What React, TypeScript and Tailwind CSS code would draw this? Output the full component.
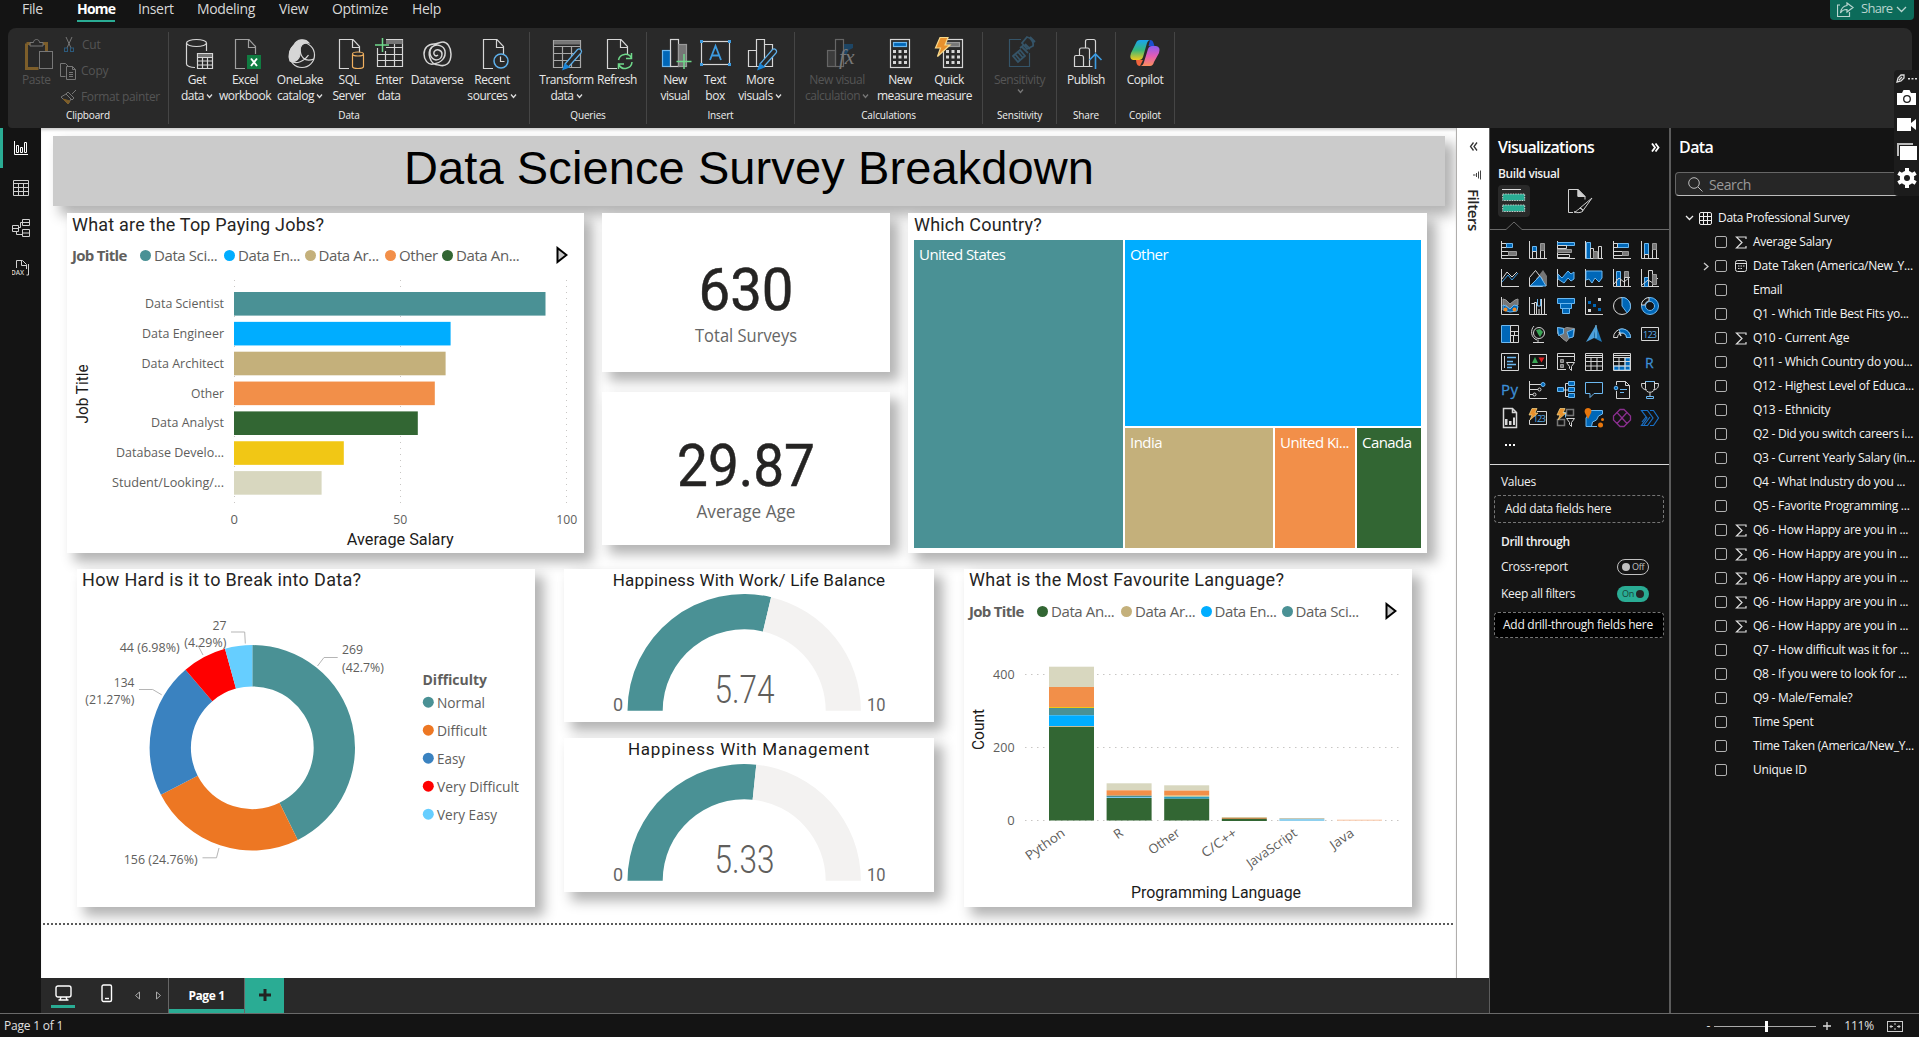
import React from "react";

const W = "#d6d6d6";
const B = "#0067b8";
const L = "#6cb8f0";
const G = "#767676";
const TEAL = "#4a9195";

const SEGOE = "'Open Sans','Noto Sans',sans-serif";
const DIN = "Roboto,sans-serif";

type Kids = { children?: React.ReactNode };

/* ---------- ribbon icons (30 x 30) ---------- */
const Ico = ({ children, w = 30, h = 30 }: Kids & { w?: number; h?: number }) => (
  <svg width={w} height={h} viewBox={`0 0 ${w} ${h}`} fill="none" stroke={W} strokeWidth={1.2} className="block shrink-0">
    {children}
  </svg>
);
const Doc = () => <path d="M14 29.5H4.500V.5H18l6.500 7V15M17.500.5v8h7" />;
const Pencil = () => (
  <g>
    <path d="M13 25 25.500 10.500a2.500 2.500 0 0 1 3.500 3.500L16.500 28" stroke="#5fb0ea" fill="#292929" />
    <path d="M13 25l-2 5.500 6-2.500z" fill="#1a86d9" stroke="#1a86d9" />
  </g>
);

const GetData = () => (
  <Ico>
    <ellipse cx="12.500" cy="4" rx="10" ry="3.500" />
    <path d="M2.500 4v21c0 2 4 3.500 8.500 3.500M22.500 4v8" />
    <path d="M13.500 14.500h15v15h-15zM13.500 18.500h15M13.500 22h15M13.500 26h15M18.500 18v11M23.500 18v11" />
    <path d="M14 16.500h14" stroke={G} strokeWidth={3} />
  </Ico>
);
const Excel = () => (
  <Ico>
    <g stroke="#a0a0a0"><Doc /></g>
    <rect x="16" y="16" width="14" height="14" fill="#107c41" stroke="none" />
    <path d="M20 19.500l6 7.500M26 19.500l-6 7.500" stroke="#fff" strokeWidth={2} />
  </Ico>
);
const OneLake = () => (
  <Ico>
    <circle cx="15" cy="16" r="12.500" />
    <path d="M7 6C10 0 18-1 22 4c-7-1-9 3-9 8 1 8-5 12-10 10-2-6 0-12 4-16z" fill="#d6d6d6" />
    <path d="M13 9c0 8 4 15 14 11M3.500 22c6 4 14 0 18-6" />
  </Ico>
);
const Sql = () => (
  <Ico>
    <Doc />
    <path d="M17.500 15.500v12c0 1.200 2.500 2 5.500 2s5.500-.8 5.500-2v-12" stroke="#f0b060" fill="#292929" />
    <ellipse cx="23" cy="15" rx="5.500" ry="2" stroke="#f0b060" fill="#292929" />
  </Ico>
);
const EnterData = () => (
  <Ico>
    <path d="M3.500 9v18.500h25V.5H12M3.500 15.500h25M3.500 21.500h25M11.500 12v15.500M20.500 5v22.500M12 8.500h16" />
    <path d="M12 3h16.500" stroke={G} strokeWidth={4} />
    <path d="M8.500-1v14M1 6h14" stroke="#6fd88a" strokeWidth={1.500} />
  </Ico>
);
const Dataverse = () => (
  <Ico>
    <path d="M17 26c6 2 12-1 12-11 0-7-4-12-8-12-3 0-6 2-9 2C6 5 2 9 2 15c0 6 4 11 9 10 9-1 13-7 12-13-1-5-8-8-13-4-4 4-2 12 4 13 4 0 6-3 6-6 0-4-6-6-8-2-1 3 2 5 4 3" strokeWidth={1.500} />
    <path d="M10 8C5 13 7 26 17 26" strokeWidth={1.500} />
  </Ico>
);
const Recent = () => (
  <Ico>
    <Doc />
    <circle cx="22" cy="22" r="7" stroke="#5fb0ea" fill="#292929" strokeWidth={1.500} />
    <path d="M21.500 17.500v5h4" />
  </Ico>
);
const Transform = () => (
  <Ico>
    <path d="M1.500 1.500h27v27h-27zM1.500 7.500h27M1.500 14.500h27M1.500 21.500h27M10.500 7v21M19.500 7v21" stroke="#a8a8a8" />
    <path d="M2 3.500h26" stroke={G} strokeWidth={4} />
    <Pencil />
  </Ico>
);
const Refresh = () => (
  <Ico>
    <Doc />
    <path d="M15.500 21a7 7 0 0 1 13-2M29 23a7 7 0 0 1-13 3M28.500 14v5.500H23M15.500 30v-5h5.500" stroke="#6fd88a" strokeWidth={1.500} />
  </Ico>
);
const NewVisual = () => (
  <Ico>
    <rect x="1.500" y="11.500" width="8" height="16" fill={B} stroke={L} />
    <rect x="9.500" y=".5" width="8" height="27" />
    <rect x="17.500" y="5.500" width="8" height="22" fill={G} stroke="#999" />
    <path d="M23 15v15M15.500 22.500h15" stroke="#6fd88a" strokeWidth={1.500} />
  </Ico>
);
const TextBox = () => (
  <Ico>
    <rect x="1.500" y="2.500" width="28" height="23" />
    <g fill="#3d9be0" stroke="none">
      <rect x="0" y="1" width="3" height="3" /><rect x="28" y="1" width="3" height="3" />
      <rect x="0" y="24" width="3" height="3" /><rect x="28" y="24" width="3" height="3" />
    </g>
    <path d="M10 21 15.500 7 21 21M12 16.500h7" stroke="#3d9be0" strokeWidth={1.800} />
  </Ico>
);
const MoreVisuals = () => (
  <Ico>
    <path d="M1.500 27.500v-16h8v16zM9.500 27.500V.5h8v27zM17.500 5.500h8v22h-8z" />
    <Pencil />
  </Ico>
);
const Fx = ({ children }: Kids) => <text fontFamily="'Liberation Serif',serif" fontStyle="italic" fontSize="22" stroke="none" fill="#777" x="14" y="25">{children}</text>;
const NewCalc = () => (
  <Ico>
    <rect x="2.500" y="11.500" width="8" height="16" fill="#3c3c3c" stroke="#666" />
    <rect x="10.500" y=".5" width="8" height="27" stroke="#666" />
    <path d="M19 5h9v4l-4 2-3 5h-2z" fill="#1d4564" stroke="none" />
    <Fx>fx</Fx>
  </Ico>
);
const Calc = ({ x = 5 }: { x?: number }) => (
  <g>
    <rect x={x + 0.5} y=".5" width="19" height="28" />
    {[0, 1, 2].map((r) => [0, 1, 2].map((c) => <rect key={`${r}${c}`} x={x + 3 + c * 5.5} y={11 + r * 5.5} width="3" height="3" fill={W} stroke="none" />))}
  </g>
);
const NewMeasure = () => (
  <Ico><Calc /><rect x="8.500" y="3.500" width="13" height="4" fill={B} stroke={L} /></Ico>
);
const QuickMeasure = () => (
  <Ico>
    <g transform="translate(4 0)"><Calc /><rect x="8.500" y="3.500" width="13" height="4" fill={G} stroke="#999" /></g>
    <path d="M6-1.500h8L11 6h5L3.500 17.500 6.500 9h-5z" fill="#e8912d" stroke="#f8d98a" />
  </Ico>
);
const Sens = () => (
  <Ico>
    <g stroke="#355468">
      <path d="M16 .5H4.500v27h20V14" />
      <path d="M8 17l7-6 5 6-7 6zM10 15l5 6M13 13l5 6M17 8l6 6M15 9l4-3M22-2c4 1 7 5 6 9l-6 3-5-6zM20 5l5 5M25-2l5 5" strokeWidth={1.800} />
    </g>
  </Ico>
);
const Publish = () => (
  <Ico>
    <path d="M12.500 8.500v-6q0-2 2-2h6q2 0 2 2v11M6.500 16v-5q0-2 2-2h6q2 0 2 2v17M10.500 27.500h-9V18q0-1.500 1.500-1.500h5.500q2 0 2 2zM10.500 27.500h9" />
    <path d="M22.500 30V15.500M16.500 21l6-6 6 6" stroke="#3d9be0" strokeWidth={1.600} />
  </Ico>
);
const Copilot = () => (
  <svg width="30" height="30" viewBox="0 0 30 30" className="block">
    <defs>
      <linearGradient id="ca" x1="0" y1="0" x2="0" y2="1"><stop offset="0" stopColor="#1aa3f0" /><stop offset=".5" stopColor="#35b77c" /><stop offset="1" stopColor="#f3c91c" /></linearGradient>
      <linearGradient id="cb" x1="0" y1="0" x2="0" y2="1"><stop offset="0" stopColor="#8d5cf0" /><stop offset=".5" stopColor="#e35bb5" /><stop offset="1" stopColor="#fb8f5c" /></linearGradient>
    </defs>
    <path d="M20 1c2 0 3 1 3.500 3l1 3h-6z" fill="#1b4fd0" />
    <path d="M6 4q1-3 4-3h10q-2 0-3 3l-4 14q-1 3-4 3H3q-4-1-2-7z" fill="url(#ca)" />
    <path d="M24 23q-1 4-4 4H10q3 0 4-4l4-13q1-3 4-3h4q5 1 3 7z" fill="url(#cb)" />
    <path d="M10 27c-2 0-3-1-3.500-3L6 21h7z" fill="#f0643c" />
  </svg>
);

const Chev = ({ c = "#ddd" }: { c?: string }) => (
  <svg width="7" height="6" viewBox="0 0 7 6" className="ml-[2px] inline-block" fill="none" stroke={c} strokeWidth={1.300}><path d="M1 1.500 3.500 4.500 6 1.500" /></svg>
);

type BtnProps = { w: string; icon: React.ReactNode; a: string; b?: string; chev?: boolean; dim?: boolean; pad?: string };
const Btn = ({ w, icon, a, b, chev, dim, pad = "" }: BtnProps) => (
  <div className={`flex shrink-0 flex-col items-center text-[12px] leading-4 tracking-[-0.45px] whitespace-nowrap ${w} ${dim ? "text-[#555]" : "text-[#e8e8e8]"}`}>
    <div className={`mb-[2px] h-[31px] [&>svg]:overflow-visible ${pad}`}>{icon}</div>
    <span>{a}</span>
    <span className="flex items-center">{b}{chev && <Chev c={dim ? "#777" : "#ddd"} />}</span>
  </div>
);
const Group = ({ w, label, children, pad = "" }: Kids & { w: string; label: string; pad?: string }) => (
  <div className={`mt-1 flex h-[92px] shrink-0 flex-col justify-between border-r border-[#454545] pt-[7px] pb-px ${w}`}>
    <div className={`flex h-[66px] ${pad}`}>{children}</div>
    <span className="text-center text-[10px] leading-4 tracking-[-0.15px] text-[#f0f0f0]">{label}</span>
  </div>
);

const Ribbon = () => (
  <div className="mr-[7px] ml-2 flex h-[100px] rounded-t-lg rounded-bl bg-[#292929]">
    <Group w="w-[161px]" label="Clipboard">
      <div className="ml-[14px] w-[32px] text-[12px] text-[#555]">
        <svg width="29" height="32" viewBox="0 0 29 32" fill="none" className="ml-[2px] block">
          <path d="M2.500 4.500v25h12M2.500 4.500h4M19 4.500h3.500v8" stroke="#7d5e2a" strokeWidth="3" />
          <path d="M6 7V3.500h3.500c0-4 6-4 6 0H19V7z" stroke="#777" />
          <rect x="15.500" y="12.500" width="13" height="17" stroke="#777" fill="#292929" />
        </svg>
        <div className="mt-[1px] leading-4 tracking-[-0.4px]">Paste</div>
      </div>
      <div className="ml-[6px] -mt-[7px] flex flex-col text-[12px] tracking-[-0.2px] text-[#555]">
        <div className="flex h-[26px] shrink-0 items-center gap-[6px] pl-[2px]">
          <svg width="14" height="16" viewBox="0 0 14 16" fill="none" stroke="#777"><path d="M4 0l5 11M10 0L5 11" /><g stroke="#2c5a7c"><rect x="2.500" y="11" width="3" height="3.500" /><rect x="8.500" y="11" width="3" height="3.500" /></g></svg>Cut
        </div>
        <div className="flex h-[26px] shrink-0 items-center gap-[4px]">
          <svg width="17" height="17" viewBox="0 0 17 17" fill="none" stroke="#777"><path d="M5.500 13.500h-5V.5h5l3 3M6.500 3.500h6l3 3v10h-9zM12.500 3.500v3h3M9 9.500h4M9 11.500h4M9 13.500h4" /></svg>Copy
        </div>
        <div className="flex h-[26px] shrink-0 items-center gap-[4px]">
          <svg width="17" height="17" viewBox="0 0 17 17" fill="none" stroke="#777"><path d="M16 1l-4 4M8 3l6 6-2 2-6-6zM6 5L1 8l7 7 3-5" /><path d="M3 10l5 5 2-3z" fill="#7d5e2a" stroke="#7d5e2a" /></svg>
          <span className="tracking-[-0.35px] whitespace-nowrap">Format painter</span>
        </div>
      </div>
    </Group>
    <Group w="w-[361px]" label="Data" pad="pl-1">
      <Btn w="w-12" icon={<GetData />} a="Get" b="data" chev pad="pl-1" />
      <Btn w="w-12" icon={<Excel />} a="Excel" b="workbook" pad="pl-[2px]" />
      <Btn w="w-[62px]" icon={<OneLake />} a="OneLake" b="catalog" chev pad="pl-1" />
      <Btn w="w-9" icon={<Sql />} a="SQL" b="Server" pad="pl-px" />
      <Btn w="w-11" icon={<EnterData />} a="Enter" b="data" />
      <Btn w="w-[52px]" icon={<Dataverse />} a="Dataverse" />
      <Btn w="w-[58px]" icon={<Recent />} a="Recent" b="sources" chev pad="pl-1" />
    </Group>
    <Group w="w-[117px]" label="Queries" pad="pl-[7px]">
      <Btn w="w-[59px]" icon={<Transform />} a="Transform" b="data" chev />
      <Btn w="w-[42px]" icon={<Refresh />} a="Refresh" pad="pl-px" />
    </Group>
    <Group w="w-[148px]" label="Insert" pad="pl-2">
      <Btn w="w-10" icon={<NewVisual />} a="New" b="visual" pad="pl-px" />
      <Btn w="w-10" icon={<TextBox />} a="Text" b="box" />
      <Btn w="w-[50px]" icon={<MoreVisuals />} a="More" b="visuals" chev pad="pl-[3px]" />
    </Group>
    <Group w="w-[188px]" label="Calculations" pad="pl-[7px]">
      <Btn w="w-[70px]" icon={<NewCalc />} a="New visual" b="calculation" chev dim pad="pl-[5px]" />
      <Btn w="w-14" icon={<NewMeasure />} a="New" b="measure" />
      <Btn w="w-[42px]" icon={<QuickMeasure />} a="Quick" b="measure" />
    </Group>
    <Group w="w-[74px]" label="Sensitivity" pad="justify-center"><Btn w="w-14" icon={<Sens />} a="Sensitivity" b="" chev dim /></Group>
    <Group w="w-[59px]" label="Share" pad="justify-center"><Btn w="w-12" icon={<Publish />} a="Publish" pad="pl-1" /></Group>
    <Group w="w-[59px]" label="Copilot" pad="justify-center"><Btn w="w-12" icon={<Copilot />} a="Copilot" /></Group>
  </div>
);

const MenuBar = () => (
  <div className="flex h-7 justify-between text-[14px] tracking-[-0.35px] text-[#d8d8d8]">
    <div className="flex pl-[22px] leading-[18px] whitespace-nowrap">
      <span className="w-[55px]">File</span>
      <span className="w-[61px]"><b className="inline-block h-[22px] w-[38px] border-b-2 border-[#2aac94] tracking-[-0.8px] text-white">Home</b></span>
      <span className="w-[59px]">Insert</span>
      <span className="w-[82px]">Modeling</span>
      <span className="w-[53px]">View</span>
      <span className="w-[80px]">Optimize</span>
      <span>Help</span>
    </div>
    <div className="mr-[5px] flex h-5 w-[84px] items-center rounded-b bg-[#0c6b5a] pb-[2px] pl-[7px] text-[13px] tracking-[-0.7px] text-[#b9d5cf]">
      <svg width="17" height="15" viewBox="0 0 17 15" fill="none" stroke="#b9d5cf" strokeWidth={1.200}><path d="M3 3H.5v11.500h12V10M10 1l6 4.500-6 4.500V7.500C7 7.300 5 8.500 3.500 11 4 7 6 4 10 3.500z" /></svg>
      <span className="ml-[7px] w-[35px]">Share</span>
      <svg width="11" height="7" viewBox="0 0 11 7" fill="none" stroke="#b9d5cf" strokeWidth={1.300}><path d="M1 1l4.500 4.500L10 1" /></svg>
    </div>
  </div>
);

/* ---------- left navigation ---------- */
const LeftNav = () => {
  const p = { width: 18, height: 18, viewBox: "0 0 18 18", fill: "none", stroke: "#d0d0d0" };
  return (
    <div className="flex w-[41px] shrink-0 flex-col bg-[#141414] [&>div]:flex [&>div]:h-10 [&>div]:items-center [&>div]:justify-center">
      <div className="border-l-[3px] border-[#2aac94] pr-[3px]"><svg {...p} stroke="#fff"><path d="M2.500 2v13.500H16M4.500 6.500h2v7h-2zM8.500 8.500h2v5h-2zM12.500 3.500h2v10h-2z" /></svg></div>
      <div><svg {...p}><path d="M1.500 1.500h15v15h-15zM1.500 4.500h15M1.500 8.500h15M1.500 12.500h15M6.500 4.500v12M11.500 4.500v12" /></svg></div>
      <div><svg {...p}><path d="M.5 6.500h6v6h-6zM.5 9.500h6M10.500.5h7v6h-7zM10.500 3.500h7M10.500 10.500h7v7h-7zM10.500 14h7M6.500 8.500h2v-5h2M4.500 12.500v3h6" /></svg></div>
      <div>
        <svg {...p}>
          <path d="M4.500 9V1.500h6l4 4V10M9.500 1.500v5h5M16.500 5v11h-2" />
          <text x="-1" y="16" fontSize="6.500" fontWeight="600" fontFamily={SEGOE} fill="#d0d0d0" stroke="none" textLength="13">DAX</text>
        </svg>
      </div>
    </div>
  );
};

/* ---------- report visuals ---------- */
const Card = ({ className, children }: Kids & { className: string }) => (
  <div className={`shrink-0 bg-white shadow-[8px_8px_12px_1px_rgba(0,0,0,0.3)] ${className}`}>{children}</div>
);

type TProps = { x: number; y: number; s?: number; len?: number; a?: "start" | "middle" | "end"; f?: string; c?: string; w?: number; rot?: number; children: string };
const T = ({ x, y, s = 13, len, a = "start", f = SEGOE, c = "#605e5c", w = 400, rot, children }: TProps) => (
  <text x={x} y={y} fontSize={s} fontFamily={f} fontWeight={w} fill={c} textAnchor={a} textLength={len} lengthAdjust="spacingAndGlyphs" transform={rot ? `rotate(${rot} ${x} ${y})` : undefined}>{children}</text>
);

const Legend = ({ items, gap }: { items: [string, string, string][]; gap: string }) => (
  <div className="flex h-5 items-center text-[15px] whitespace-nowrap tracking-[-0.4px] text-[#605e5c]">
    <b className={`tracking-[-0.7px] ${gap}`}>Job Title</b>
    {items.map(([name, color, w]) => (
      <span key={name + color} className={`flex shrink-0 items-center ${w}`}>
        <svg width="11" height="11" className="mr-[3px] shrink-0"><circle cx="5.500" cy="5.500" r="5.500" fill={color} /></svg>
        {name}
      </span>
    ))}
    <svg width="12" height="18" viewBox="0 0 12 18" fill="#c8c8c8" stroke="#000" strokeWidth={2}><path d="M1.500 2v14L10.500 9z" /></svg>
  </div>
);

const TopPaying = () => {
  const rows: [string, number, string, number][] = [
    ["Data Scientist", 311.5, "#4a9195", 79],
    ["Data Engineer", 216.6, "#00adff", 82],
    ["Data Architect", 211.6, "#c4b07b", 82.500],
    ["Other", 200.8, "#f28f49", 33],
    ["Data Analyst", 183.8, "#326633", 73],
    ["Database Develo...", 109.8, "#f1c715", 108],
    ["Student/Looking/...", 87.6, "#d8d7bf", 112],
  ];
  return (
    <Card className="h-[340px] w-[517px]">
      <h2 className="pt-[1px] pl-[5px] text-[18px] leading-[22px] tracking-[0.2px] text-[#252423]" style={{ fontFamily: DIN }}>What are the Top Paying Jobs?</h2>
      <div className="mt-[9px] mb-[2px] pl-[5px]">
        <Legend gap="w-[68px]" items={[["Data Sci...", "#4a9195", "w-[84px]"], ["Data En...", "#00adff", "w-[80.500px]"], ["Data Ar...", "#c4b07b", "w-[80.500px]"], ["Other", "#f28f49", "w-[57px]"], ["Data An...", "#326633", "w-[114px]"]]} />
      </div>
      <svg width="517" height="286" viewBox="67 267 517 286" className="block">
        {[234.5, 400.5, 566.5].map((x) => <path key={x} d={`M${x} 280V508`} stroke="#c8c6c4" strokeDasharray="1 5" />)}
        {rows.map(([n, w, c, len], i) => (
          <g key={n}>
            <rect x="234" y={292 + i * 29.85} width={w} height="23.600" fill={c} />
            <T x={224} y={308 + i * 29.85} a="end" len={len}>{n}</T>
          </g>
        ))}
        <T x={234.300} y={523.500} a="middle">0</T>
        <T x={400.300} y={523.500} a="middle" len={14}>50</T>
        <T x={566.800} y={523.500} a="middle" len={21}>100</T>
        <T x={400.300} y={544.500} s={16} f={DIN} c="#1c1b1a" a="middle" len={107}>Average Salary</T>
        <T x={87.500} y={394} s={16} f={DIN} c="#1c1b1a" a="middle" len={59} rot={-90}>Job Title</T>
      </svg>
    </Card>
  );
};

const Kpi = ({ value, len, label, lw, h, top }: { value: string; len: number; label: string; lw: number; h: string; top: number }) => (
  <Card className={`w-[288px] ${h}`}>
    <svg width="288" height="150" className="block">
      <g stroke="#252423" strokeWidth={0.500}><T x={144} y={top} s={59} f={DIN} c="#252423" a="middle" len={len}>{value}</T></g>
      <T x={144} y={top + 31.5} s={18} a="middle" len={lw} c="#666">{label}</T>
    </svg>
  </Card>
);

const Treemap = () => (
  <Card className="h-[340px] w-[519px] px-[6px] text-[15px] tracking-[-0.55px] text-white">
    <h2 className="pt-[1px] text-[18px] leading-[22px] tracking-[0.2px] text-[#252423]" style={{ fontFamily: DIN }}>Which Country?</h2>
    <div className="mt-1 flex h-[308px] gap-[2px] [&_div]:leading-[20px]">
      <div className="w-[209px] bg-[#4a9195] pt-1 pl-[5px]">United States</div>
      <section className="flex w-[296px] flex-col gap-[2px]">
        <div className="h-[186px] bg-[#00adff] pt-1 pl-[5px]">Other</div>
        <section className="flex h-[120px] gap-[2px]">
          <div className="w-[148px] bg-[#c4b07b] pt-1 pl-[5px]">India</div>
          <div className="w-[80px] bg-[#f28f49] pt-1 pl-[5px] whitespace-nowrap">United Ki...</div>
          <div className="w-[64px] bg-[#326633] pt-1 pl-[5px]">Canada</div>
        </section>
      </section>
    </div>
  </Card>
);

const arc = (cx: number, cy: number, R: number, r: number, a0: number, a1: number) => {
  const p = (rad: number, a: number) => `${(cx + rad * Math.sin(a)).toFixed(2)} ${(cy - rad * Math.cos(a)).toFixed(2)}`;
  const big = a1 - a0 > Math.PI ? 1 : 0;
  return `M${p(R, a0)}A${R} ${R} 0 ${big} 1 ${p(R, a1)}L${p(r, a1)}A${r} ${r} 0 ${big} 0 ${p(r, a0)}Z`;
};

const Donut = () => {
  const parts: [string, number, string][] = [["Normal", 269, TEAL], ["Difficult", 156, "#ed7723"], ["Easy", 134, "#3a82c0"], ["Very Difficult", 44, "#ff0000"], ["Very Easy", 27, "#66ceff"]];
  const lens = [48, 50, 28, 82, 60];
  let acc = 0;
  return (
    <Card className="h-[338px] w-[458px]">
      <h2 className="pl-[5px] text-[18px] leading-[22px] tracking-[0.33px] text-[#252423]" style={{ fontFamily: DIN }}>How Hard is it to Break into Data?</h2>
      <svg width="458" height="315" viewBox="77 591.500 458 315" className="block">
        {parts.map(([n, v, c]) => {
          const a0 = (acc / 630) * 2 * Math.PI;
          acc += v;
          return <path key={n} d={arc(252.3, 748.3, 102.7, 61.4, a0, (acc / 630) * 2 * Math.PI)} fill={c} />;
        })}
        <path d="M231 632.500h13.700l.6 11.500M317.500 666.500l6.500-8.500h13.700M139 690h13.700l9 5.300M198 646l5 9.500M202.500 858.300h14l2.500-9.800" fill="none" stroke="#b5b5b5" />
        <T x={226.500} y={630.300} a="end" len={14}>27</T>
        <T x={226.300} y={647.300} a="end" len={42}>(4.29%)</T>
        <T x={179.700} y={652.300} a="end" len={60}>44 (6.98%)</T>
        <T x={342} y={654.300} len={21}>269</T>
        <T x={342} y={672.300} len={42}>(42.7%)</T>
        <T x={134.300} y={687.300} a="end" len={20.500}>134</T>
        <T x={134.300} y={704.300} a="end" len={49}>(21.27%)</T>
        <T x={197.700} y={864.300} a="end" len={74}>156 (24.76%)</T>
        <T x={422.500} y={685} s={15} w={700} len={64.500}>Difficulty</T>
        {parts.map(([n, , c], i) => (
          <g key={n}>
            <circle cx="428.300" cy={702.7 + i * 28} r="5.500" fill={c} />
            <T x={437} y={708.2 + i * 28} s={15} len={lens[i]}>{n}</T>
          </g>
        ))}
      </svg>
    </Card>
  );
};

const Gauge = ({ title, value, h, track, drop }: { title: string; value: number; h: string; track: string; drop: string }) => {
  const a = -Math.PI / 2 + (value / 10) * Math.PI;
  return (
    <Card className={`w-[370px] ${h}`}>
      <h2 className={`text-center text-[17px] leading-[22px] text-[#1c1b1a] ${track}`} style={{ fontFamily: DIN }}>{title}</h2>
      <svg width="370" height="124" viewBox="564 592 370 124" className={`block ${drop}`}>
        <path d={arc(744.2, 710.7, 116.7, 81.5, -Math.PI / 2, a)} fill={TEAL} />
        <path d={arc(744.2, 710.7, 116.7, 81.5, a, Math.PI / 2)} fill="#f3f2f1" />
        <T x={613} y={711.300} s={18} f={DIN} c="#666">0</T>
        <T x={867} y={711.300} s={18} f={DIN} c="#666" len={18.500}>10</T>
        <T x={744.500} y={703.300} s={39} f={DIN} w={300} c="#605e5c" a="middle" len={60}>{value.toFixed(2)}</T>
      </svg>
    </Card>
  );
};

const Languages = () => {
  const bars: [number, [number, number, string][]][] = [
    [1049, [[666.7, 687, "#d8d7bf"], [687, 707, "#f28f49"], [707, 708, "#f1c715"], [708, 715.3, TEAL], [715.3, 726.2, "#00adff"], [726.2, 727, "#c4b07b"], [727, 820.5, "#326633"]]],
    [1106.600, [[783.3, 790.3, "#d8d7bf"], [790.3, 795.7, "#f28f49"], [795.7, 797, TEAL], [797, 798, "#7cc8ee"], [798, 820.5, "#326633"]]],
    [1164.200, [[785.3, 790.6, "#d8d7bf"], [790.6, 795.7, "#f28f49"], [795.7, 796.7, "#e0cf80"], [796.7, 798.8, "#2f9fc4"], [798.8, 820.5, "#326633"]]],
    [1221.800, [[817, 818, "#d8c9a4"], [818, 819, "#c08a50"], [819, 821, "#326633"]]],
    [1279.400, [[818, 819, "#c9c8b4"], [819, 821, "#8fd0ee"]]],
    [1337, [[819.6, 820.8, "#f9cdb0"]]],
  ];
  const names: [string, number, number][] = [["Python", 1066, 45], ["R", 1124, 8], ["Other", 1181, 35], ["C/C++", 1238, 40], ["JavaScript", 1298, 58], ["Java", 1355, 26]];
  return (
    <Card className="h-[338px] w-[448px]">
      <h2 className="pl-[5px] text-[18px] leading-[22px] tracking-[0.27px] text-[#252423]" style={{ fontFamily: DIN }}>What is the Most Favourite Language?</h2>
      <div className="mt-[10px] mb-[2px] pl-[5px]">
        <Legend gap="w-[68px]" items={[["Data An...", "#326633", "w-[84px]"], ["Data Ar...", "#c4b07b", "w-[79.500px]"], ["Data En...", "#00adff", "w-[81px]"], ["Data Sci...", "#4a9195", "w-[103px]"]]} />
      </div>
      <svg width="448" height="284" viewBox="964 623 448 284" className="block">
        {[674.5, 747.5, 820.5].map((y) => <path key={y} d={`M1025 ${y}H1402.500`} stroke="#c8c6c4" strokeDasharray="1.500 4.500" />)}
        {bars.map(([x, segs]) => segs.map(([t, b, c]) => <rect key={`${x}${t}`} x={x} y={t} width="45" height={b - t} fill={c} />))}
        <T x={1014.600} y={678.500} a="end" len={21.500}>400</T>
        <T x={1014.600} y={751.500} a="end" len={21.500}>200</T>
        <T x={1014.600} y={824.500} a="end">0</T>
        {names.map(([n, x, len]) => <T key={n} x={x} y={835} a="end" len={len} rot={-35}>{n}</T>)}
        <T x={984} y={729.500} s={16} f={DIN} c="#1c1b1a" a="middle" len={41} rot={-90}>Count</T>
        <T x={1216} y={897.500} s={16} f={DIN} c="#1c1b1a" a="middle" len={170}>Programming Language</T>
      </svg>
    </Card>
  );
};

const Report = () => (
  <div className="flex h-[850px] w-[1416px] flex-col overflow-hidden bg-white shadow-[inset_0_3px_3px_-1px_rgba(0,0,0,0.2)]">
    <div className="mt-2 ml-3 h-[70px] w-[1392px] shrink-0 bg-[#cbcbcb] text-center text-[47px] leading-[64px] tracking-[0.1px] text-black shadow-[8px_8px_12px_1px_rgba(0,0,0,0.3)]" style={{ fontFamily: "'Liberation Sans',Arial,sans-serif" }}>
      Data Science Survey Breakdown
    </div>
    <div className="mt-[7px] ml-[26px] flex">
      <TopPaying />
      <div className="mr-[18px] ml-[18px] flex flex-col gap-5">
        <Kpi value="630" len={95} label="Total Surveys" lw={102} h="h-[159px]" top={97} />
        <Kpi value="29.87" len={138} label="Average Age" lw={99} h="h-[153px]" top={94} />
      </div>
      <Treemap />
    </div>
    <div className="mt-4 ml-9 flex">
      <Donut />
      <div className="mr-[30px] ml-[29px] flex flex-col gap-4">
        <Gauge title="Happiness With Work/ Life Balance" value={5.74} h="h-[153px]" track="tracking-[0.2px]" drop="mt-[1px]" />
        <Gauge title="Happiness With Management" value={5.33} h="h-[154px]" track="tracking-[0.75px]" drop="mt-[2px]" />
      </div>
      <Languages />
    </div>
    <svg width="1412" height="2" className="mt-4 ml-[2px] shrink-0"><path d="M0 1H1412" stroke="#5a5a5a" strokeWidth={2} strokeDasharray="2 2" /></svg>
  </div>
);

const PageTabs = () => (
  <div className="flex h-[35px] bg-[#292929]">
    <div className="flex w-[128px] border-r border-[#666]">
      <div className="ml-[10px] flex h-[30px] w-6 flex-col items-center justify-between border-b-[3px] border-[#2aac94] pt-[7px]">
        <svg width="17" height="16" viewBox="0 0 17 16" fill="none" stroke="#fff" strokeWidth={1.400}><rect x="1" y="1" width="15" height="11" rx="2" /><path d="M6 12l-1 3M11 12l1 3M3.500 15h10" /></svg>
      </div>
      <svg width="12" height="19" viewBox="0 0 12 19" fill="none" stroke="#fff" strokeWidth={1.400} className="mt-[6px] ml-[26px]"><rect x="1" y="1" width="9.500" height="16.500" rx="1.500" /><path d="M4 14.500h4" /></svg>
      <svg width="28" height="9" viewBox="0 0 28 9" fill="none" stroke="#aaa" className="mt-[13px] ml-[21px]"><path d="M5.500 1v7L1.500 4.500zM22.500 1v7l4-3.500z" /></svg>
    </div>
    <div className="flex w-[75px] items-center justify-center border-b-4 border-[#2aac94] pt-1 text-[12px] font-bold tracking-[-0.4px] text-white">Page 1</div>
    <div className="flex w-[40px] items-center justify-center border-l border-[#666] bg-[#2aac94]"><svg width="12" height="12" className="mb-[2px]"><path d="M6 0v12M0 6h12" stroke="#222" strokeWidth={3} /></svg></div>
  </div>
);

const FiltersPane = () => (
  <div className="flex w-[33px] shrink-0 flex-col items-center border-l border-[#b0aeac] bg-white text-[#252423]">
    <svg width="9" height="9" viewBox="0 0 9 9" fill="none" stroke="#333" strokeWidth={1.300} className="mt-[14px]"><path d="M4.500.5l-3 4 3 4M8 .5l-3 4 3 4" /></svg>
    <svg width="9" height="10" viewBox="0 0 9 10" stroke="#444" className="mt-[19px] ml-[6px]"><path d="M8.500.5v9M6.500 1.500v7M4.500 3v4M1 5h2.500" /></svg>
    <span className="mt-[9px] ml-[2px] text-[15px] leading-5 font-semibold tracking-[-0.4px] [writing-mode:vertical-rl]">Filters</span>
  </div>
);

/* ---------- visualization gallery (18 x 18 glyphs) ---------- */
const ax = <path d="M.5 0v17.500H18" stroke={W} />;
const bolt = <path d="M3-.5h5L6 4h3L1 11l2-5H0z" fill="#e8912d" stroke="#f8d98a" strokeWidth={0.700} />;
const gallery: React.ReactNode[] = [
  <>{ax}<path d="M.5 2.500h5v4h-5zM.5 10.500h7v4h-7z" stroke={W} /><path d="M5.500 2.500h6v4h-6z" fill={B} stroke={L} /><path d="M7.500 10.500h8v4h-8z" fill={G} stroke="#999" /></>,
  <>{ax}<path d="M3.500 5.500h4v5h-4z" fill={B} stroke={L} /><path d="M3.500 10.500h4v7h-4zM11.500 8.500h4v9h-4z" stroke={W} /><path d="M11.500 2.500h4v7h-4z" fill={G} stroke="#999" /></>,
  <>{ax}<path d="M.5 1.500h17v3H.5z" fill={B} stroke={L} /><path d="M.5 4.500h9v3h-9zM.5 13.500h12v3H.5z" stroke={W} /><path d="M.5 8.500h14v3H.5z" fill={G} stroke="#999" /></>,
  <>{ax}<path d="M1.500 1.500h4v16h-4z" fill={B} stroke={L} /><path d="M5.500 7.500h3v10h-3zM13.500 5.500h3v12h-3z" stroke={W} /><path d="M8.500 10.500h4v7h-4z" fill={G} stroke="#999" /></>,
  <>{ax}<path d="M4.500 2.500h11v4h-11z" fill={B} stroke={L} /><path d="M.5 2.500h4v4h-4zM.5 10.500h9v4h-9z" stroke={W} /><path d="M9.500 10.500h6v4h-6z" fill={G} stroke="#999" /></>,
  <>{ax}<path d="M3.500 2.500h4v11h-4z" fill={B} stroke={L} /><path d="M3.500 13.500h4v4h-4zM11.500 8.500h4v9h-4z" stroke={W} /><path d="M11.500 2.500h4v6h-4z" fill={G} stroke="#999" /></>,
  <>{ax}<path d="M1 10l5-7 5 5 5-5" stroke={W} /><path d="M1 13l6-7 4 5 6-7" stroke="#3d9be0" /></>,
  <><path d="M7 10l7-9 4 6v10H9z" fill={G} /><path d="M.5 17.500v-9l6-7 7 9v7z" stroke={W} /><path d="M1 17l10-10 6 10z" fill={B} stroke={L} /></>,
  <>{ax}<path d="M1 5l4 4 6-7 3 3 3-2v7l-3 2-3-3-4 5-6-4z" fill={B} stroke={L} /></>,
  <>{ax}<path d="M1 2h16v7l-3 4-4-4-3 5-3-4-3 1z" fill={B} stroke={L} /></>,
  <>{ax}<path d="M3.500 2.500h4v15h-4z" fill={B} stroke={L} /><path d="M11.500 2.500h4v6h-4z" fill={G} stroke="#999" /><path d="M3.500 10v7.500h4V10M11.500 8.500h4v9h-4zM1 15l5-6 5 4 6-5" stroke={W} /></>,
  <>{ax}<path d="M3.500 8.500h4v9h-4z" fill={B} stroke={L} /><path d="M7.500 1.500h4v16h-4zM1 16l6-5 5 3 5-5" stroke={W} /><path d="M11.500 5.500h4v10h-4z" fill={G} stroke="#999" /></>,
  <>{ax}<path d="M2 2l3 1 4 4 5-4 3-1v6l-4 1-4 3-4-4-3 1z" fill={G} stroke="#999" /><path d="M2 8l3 1 4 3 4-4 4 1-1 5-7 1-7-2z" fill={B} stroke={L} /><circle cx="4.500" cy="12.500" r="2" fill="#f08c28" /><circle cx="13.500" cy="12.500" r="2" fill="#f08c28" /></>,
  <>{ax}<path d="M2.500 6.500h3v11M5.500 5.500h2v12h-2zM12.500 2v15.500M15.500 1.500v16M10 12v5" stroke={W} /><path d="M8.500 2v7h3V2" stroke={L} /></>,
  <><path d="M.5 1.500h17v5H.5z" fill={B} stroke={L} /><path d="M3.500 6.500h11v5h-11z" fill={B} stroke={L} /><path d="M5.500 11.500h7v5h-7z" fill={B} stroke={L} /></>,
  <>{ax}<path d="M3 4h3v3H3zM8 7h3v3H8zM13 11h3v3h-3z" fill={B} /><path d="M13 1h3v3h-3zM3 12h3v3H3z" fill={W} /></>,
  <><circle cx="9" cy="9" r="8.500" stroke={W} /><path d="M9 .5a8.500 8.500 0 0 1 5 15.300L9 9z" fill={B} stroke={L} /></>,
  <><circle cx="9" cy="9" r="6.500" stroke={B} strokeWidth={4} /><circle cx="9" cy="9" r="8.500" stroke={L} /><circle cx="9" cy="9" r="4.500" stroke={L} /><path d="M8 .5C4 1 .5 4 .5 8H4c0-2 2-4 4-4z" fill="#141414" stroke={W} /></>,
  <><path d="M.5.5h9v17h-9z" fill={B} stroke={L} /><path d="M9.500.5h8v17h-8zM9.500 6.500h8M13.500 6.500v4M9.500 10.500h8M12.500 10.500v7" stroke={W} /></>,
  <><circle cx="10" cy="8" r="5.500" stroke={W} /><path d="M7 5l4-1 3 3-3 5-2-3z" fill="#3aa655" /><path d="M5 1C1 5 2 13 8 15M9 14.500v3M4 17.500h11" stroke={W} /></>,
  <><path d="M.5 2.500l7 1 2-1 8 1-1 8-4 1-3 4-4-3-5-5z" fill={G} stroke="#999" /><path d="M.5 2.500l6 1v5l-5 2zM10 7l7-3-1 8-4 1z" fill={B} stroke={L} /></>,
  <><path d="M11 0L1 17l8-4 2-13z" fill="#4ba0dc" /><path d="M11 0l-2 13 8 4z" fill="#1f7cbf" /><path d="M11 0v13" stroke="#8fd0f5" /></>,
  <><path d="M.5 12.500a8.500 8.500 0 0 1 17 0h-4a4.500 4.500 0 0 0-9 0z" stroke={W} fill="#141414" /><path d="M6 4.500a8.500 8.500 0 0 1 11.500 8h-4A4.500 4.500 0 0 0 7.500 8z" fill={B} stroke={L} /><path d="M8 11l-2-4" stroke={W} strokeWidth={1.500} /></>,
  <><path d="M.5 2.500h17v13H.5z" stroke={W} /><text x="2" y="12.500" fontSize="9" fill="#5fb0ea" fontFamily={SEGOE} textLength="14">123</text></>,
  <><path d="M.5.5h17v17H.5zM3.500 3v12" stroke={W} /><path d="M6 4.500h9M6 8.500h6M6 11.500h9M6 14.500h5" stroke={L} strokeWidth={1.300} /></>,
  <><path d="M.5 1.500h17v14H.5zM3 12.500h12" stroke={W} /><path d="M3 10l3-6 3 6z" fill="#3aa655" /><path d="M9.500 4.500h6l-3 5z" fill="#e02020" /></>,
  <><path d="M9 16.500H.5V.5h17V8M.5 3.500h17" stroke={W} /><path d="M3.500 6.500h3v3h-3zM3.500 11.500h3v3h-3z" fill={G} stroke="#999" /><path d="M9.500 9.500h8l-3 4v4l-2-2v-2z" fill="#141414" stroke={W} /></>,
  <><path d="M.5.5h17v17H.5zM.5 4.500h17M.5 8.500h17M.5 13h17M6 4.500v13M12 4.500v13M1 2.500h16" stroke={W} /></>,
  <><path d="M12 5h5v12h-5zM1 13h16v4H1z" fill={B} stroke={L} /><path d="M.5.5h17v17H.5zM.5 4.500h17M.5 8.500h17M.5 13h17M6 4.500v13M12 4.500v13M1 2.500h16" stroke={W} /></>,
  <text x="4" y="14.500" fontSize="14" fill="#3d8fd6" stroke="#3d8fd6" strokeWidth={0.300} fontFamily={SEGOE}>R</text>,
  <text x="0" y="14" fontSize="15" fill="#3d8fd6" stroke="#3d8fd6" strokeWidth={0.300} fontFamily={SEGOE} textLength="17">Py</text>,
  <>{ax}<path d="M.5 3.500H12M.5 8.500H9M.5 13.500H4" stroke={W} /><circle cx="14" cy="3.500" r="2" fill={B} stroke={L} /><circle cx="10.500" cy="8.500" r="1.500" stroke={W} /><circle cx="5.500" cy="13.500" r="1.500" stroke={W} /></>,
  <><path d="M6 9h5.500M8.500 2.500v13M8.500 2.500h3M8.500 15.500h3" stroke={W} /><path d="M.5 6.500h6v4h-6zM11.500.5h6v4h-6zM11.500 6.500h6v4h-6zM11.500 12.500h6v4h-6z" fill={B} stroke={L} /></>,
  <><path d="M.5 1.500h17v11H9l-4 4v-4H.5z" stroke={L} /></>,
  <><path d="M3.500 4V.5h9l4 4v13h-13V10M12.500.5v4h4" stroke={W} /><circle cx="3" cy="7" r="1.800" fill={B} stroke={L} /><path d="M7 8.500h7M7 11.500h4" stroke={L} /></>,
  <><path d="M4.500.5h9v7c0 5-9 5-9 0zM4.500 2.500h-4c0 4 1 6 5 6M13.500 2.500h4c0 4-1 6-5 6M9 11.500v4" stroke={W} /><path d="M4.500.5h9M5.500 15.500h7v2h-7z" stroke={L} /></>,
  <><path d="M2.500-.5h9l4 4v15h-13zM11.500-.5v4h4" stroke={W} strokeWidth={1.500} /><path d="M4 10h2.500v6H4zM8 12h2.500v4H8zM12 8.500h2V16h-2z" fill={W} /></>,
  <><path d="M8 2.500h9.500v13H.5V11" stroke={W} /><text x="4" y="13" fontSize="9" fill="#5fb0ea" fontFamily={SEGOE} textLength="13">123</text>{bolt}</>,
  <><path d="M9.500.5h7v6h-7zM.5 10.500h7v6h-7z" stroke={G} strokeWidth={1.500} /><path d="M5.500 3.500h3v5" stroke={L} /><path d="M9.500 9.500h8l-3 4v4l-2-2v-2z" fill="#141414" stroke={W} />{bolt}</>,
  <><path d="M1 17.500V9l5-7.500h11.500V5l-4 2-2 4-4 2-1 4.500z" fill={B} stroke={L} /><path d="M2 17.500h10" stroke={L} /><path d="M3-1c3 0 4 3 3 5L3 10 0 4C-1 2 0-1 3-1z" fill="#e8760c" /><circle cx="15.500" cy="16" r="2.500" fill="#e8760c" /><circle cx="17.500" cy="10.500" r="1.500" fill="#e8760c" /></>,
  <><path d="M7 .5h4l3 3-5 5.500-5-5.500zM4 3.500L.5 7v4L4 14.500 9 9M14 3.500L17.500 7v4L14 14.500 9 9M4 14.500l3 3h4l3-3" stroke="#8a2f8f" strokeWidth={1.300} /></>,
  <><path d="M.5 1.500h6L12 9l-5.500 7.500h-6L6 9zM9 1.500h3.500L17.500 9l-5 7.500H9M1 13l4-5M3 16l6-8" stroke="#1a6fc4" strokeWidth={1.200} /></>,
];

const VizPane = () => (
  <div className="flex h-[885px] w-[182px] shrink-0 flex-col border-r-2 border-l border-[#5c5c5c] bg-[#141414] text-[12px] text-[#f0f0f0]">
    <div className="flex h-[38px] items-center justify-between pr-[9px] pl-2">
      <span className="text-[16px] font-semibold tracking-[-0.72px] whitespace-nowrap text-white">Visualizations</span>
      <svg width="9" height="9" viewBox="0 0 9 9" fill="none" stroke="#fff" strokeWidth={1.800}><path d="M1 .5l3 4-3 4M4.500.5l3 4-3 4" /></svg>
    </div>
    <span className="pl-2 leading-4 font-semibold tracking-[-0.4px]">Build visual</span>
    <div className="mt-[3px] flex pl-2">
      <div className="flex h-8 w-8 items-center justify-center rounded-sm bg-[#292929]">
        <svg width="24" height="26" viewBox="0 0 24 26"><path d="M0 1.500h19" stroke="#ddd" /><rect x=".7" y="6" width="22" height="6.500" fill="#2aac94" stroke="#ccc" strokeDasharray="1.500 1" /><rect x=".7" y="17" width="22" height="6.500" fill="#2aac94" stroke="#ccc" strokeDasharray="1.500 1" /></svg>
      </div>
      <svg width="26" height="26" viewBox="0 0 26 26" fill="none" stroke="#d0d0d0" className="mt-[3px] ml-[37px]"><path d="M6 24.500H1.500V1.500H11l7 7v3M11 1.500v7h7" /><path d="M11 1.500v7h7z" fill="#d0d0d0" /><path d="M25 10L13 20l3 2.500zM7 24c3 0 4-3 6-4 2 0 3 2 3 3-2 2-6 2-9 1z" /></svg>
    </div>
    <svg width="179" height="9" viewBox="0 0 179 9" fill="none" stroke="#6a6a6a" className="mt-[4px] block"><path d="M0 8.500h16l8-7.500 8 7.500h147" /></svg>
    <div className="mt-[11px] grid grid-cols-[repeat(6,18px)] gap-[10px] pl-[11px]">
      {gallery.map((g, i) => (
        <svg key={i} width="18" height="18" viewBox="0 0 18 18" fill="none" className="overflow-visible">{g}</svg>
      ))}
    </div>
    <span className="flex gap-[2px] pt-[17px] pl-[15px]"><i className="h-[2px] w-[2px] bg-white" /><i className="h-[2px] w-[2px] bg-white" /><i className="h-[2px] w-[2px] bg-white" /></span>
    <div className="mt-[18px] h-px bg-[#d8d8d8]" />
    <div className="flex flex-col pr-[5px] pl-1 tracking-[-0.3px] whitespace-nowrap">
      <span className="mt-[9px] pl-[7px] leading-4">Values</span>
      <div className="mt-[5px] flex h-7 items-center rounded-sm border border-dashed border-[#757575] pl-[10px]">Add data fields here</div>
      <span className="mt-[11px] pl-[7px] leading-4 font-semibold tracking-[-0.4px]">Drill through</span>
      <div className="mt-[6px] flex h-[22px] items-center justify-between pr-[15px] pl-[7px]">Cross-report
        <span className="flex h-4 w-8 items-center rounded-full border border-[#c0c0c0] pl-1 text-[9px] tracking-[-0.3px] text-[#c0c0c0]"><i className="mr-[2px] h-2 w-2 rounded-full bg-[#c0c0c0]" />Off</span>
      </div>
      <div className="mt-[5px] flex h-[22px] items-center justify-between pr-[15px] pl-[7px]">Keep all filters
        <span className="flex h-4 w-8 items-center justify-center rounded-full bg-[#2aac94] text-[9px] tracking-[-0.3px] text-[#173f38]">On<i className="ml-[2px] h-2 w-2 rounded-full bg-[#252525]" /></span>
      </div>
      <div className="mt-[7px] flex h-[26px] items-center rounded-sm border border-dashed border-[#757575] bg-black pl-2 tracking-[-0.26px]">Add drill-through fields here</div>
    </div>
  </div>
);

/* ---------- data pane ---------- */
const fields: [string, "" | "s" | "d"][] = [
  ["Average Salary", "s"], ["Date Taken (America/New_Y...", "d"], ["Email", ""], ["Q1 - Which Title Best Fits yo...", ""], ["Q10 - Current Age", "s"],
  ["Q11 - Which Country do you...", ""], ["Q12 - Highest Level of Educa...", ""], ["Q13 - Ethnicity", ""], ["Q2 - Did you switch careers i...", ""],
  ["Q3 - Current Yearly Salary (in...", ""], ["Q4 - What Industry do you ...", ""], ["Q5 - Favorite Programming ...", ""],
  ["Q6 - How Happy are you in ...", "s"], ["Q6 - How Happy are you in ...", "s"], ["Q6 - How Happy are you in ...", "s"], ["Q6 - How Happy are you in ...", "s"], ["Q6 - How Happy are you in ...", "s"],
  ["Q7 - How difficult was it for ...", ""], ["Q8 - If you were to look for ...", ""], ["Q9 - Male/Female?", ""], ["Time Spent", ""], ["Time Taken (America/New_Y...", ""], ["Unique ID", ""],
];

const DataPane = () => (
  <div className="flex h-[885px] min-w-0 flex-1 flex-col overflow-hidden bg-[#141414] text-[12px] tracking-[-0.24px] whitespace-nowrap text-[#f4f4f4]">
    <div className="flex h-[38px] items-center pl-[8px] text-[16px] font-semibold tracking-[-0.6px] text-white">Data</div>
    <div className="mt-[6px] mr-[5px] ml-1 flex h-6 shrink-0 items-center rounded border border-[#666] border-b-[#bbb] bg-[#262626] pl-3 text-[14px] tracking-[-0.4px] text-[#9a9a9a]">
      <svg width="15" height="15" viewBox="0 0 15 15" fill="none" stroke="#bbb" className="mr-[6px]"><circle cx="6" cy="6" r="5.300" /><path d="M10 10l4.500 4.500" /></svg>Search
    </div>
    <div className="mt-[10px] flex h-6 shrink-0 items-center pl-[14px]">
      <svg width="9" height="6" viewBox="0 0 9 6" fill="none" stroke="#eee" strokeWidth={1.300}><path d="M1 1l3.500 3.500L8 1" /></svg>
      <svg width="13" height="13" viewBox="0 0 13 13" fill="none" stroke="#eee" className="mr-[6px] ml-[5px]"><rect x=".5" y=".5" width="12" height="12" rx="1.500" /><path d="M.5 4.500h12M.5 8.500h12M4.500.5v12M8.500.5v12" /></svg>
      <span className="tracking-[-0.33px]">Data Professional Survey</span>
    </div>
    {fields.map(([n, k], i) => (
      <div key={i} className="flex h-6 shrink-0 items-center">
        <span className="flex w-11 justify-end pr-[6px]">
          {k === "d" && <svg width="6" height="9" viewBox="0 0 6 9" fill="none" stroke="#ccc" strokeWidth={1.300}><path d="M1 1l4 3.500L1 8" /></svg>}
        </span>
        <i className="h-3 w-3 shrink-0 rounded-[2px] border border-[#b0b0b0]" />
        <span className="flex w-[26px] shrink-0 pl-2">
          {k === "s" && <svg width="12" height="13" viewBox="0 0 12 13" fill="none" stroke="#ddd" strokeWidth={1.200}><path d="M11 3V1H1.500L7 6.500 1.500 12H11v-2" /></svg>}
          {k === "d" && <svg width="12" height="12" viewBox="0 0 12 12" fill="none" stroke="#ddd"><rect x=".5" y=".5" width="11" height="11" rx="2" /><path d="M.5 3.500h11M3 6h1.500M5.500 6H7M8 6h1.500M3 8.500h1.500M5.500 8.500H7" /></svg>}
        </span>
        <span>{n}</span>
      </div>
    ))}
  </div>
);

const CaptureBar = () => (
  <div className="absolute top-[70px] right-0 flex h-[126px] w-[25px] flex-col items-center rounded-l bg-[#1c1c1c]">
    <svg width="22" height="9" viewBox="0 0 22 9" className="mt-1"><path d="M1 8l1-4 3-3 3 0 0 3-3 3zM3 6l3-3" fill="none" stroke="#ddd" strokeWidth={1.300} /><path d="M12 4h2v1.500h-2zM15.500 4h2v1.500h-2zM19 4h2v1.500h-2z" fill="#ddd" /></svg>
    <svg width="19" height="16" viewBox="0 0 19 16" className="mt-[7px]"><path d="M0 3h5l1.500-3h6L14 3h5v12H0z" fill="#fff" /><circle cx="10" cy="9" r="3.300" fill="none" stroke="#1c1c1c" strokeWidth={1.300} /></svg>
    <svg width="19" height="14" viewBox="0 0 19 14" className="mt-3"><path d="M0 0h14v5l5-4v11l-5-4v5H0z" fill="#fff" /></svg>
    <svg width="20" height="17" viewBox="0 0 20 17" className="mt-[11px]"><path d="M0 0h16v2H2v11H0z" fill="#bbb" /><path d="M3 3h17v14H3z" fill="#fff" /></svg>
    <svg width="20" height="20" viewBox="0 0 20 20" className="mt-2"><circle cx="10" cy="10" r="5" fill="none" stroke="#fff" strokeWidth={4.500} /><path d="M10 0v20M1.300 5l17.400 10M1.300 15L18.700 5" stroke="#fff" strokeWidth={4} /><circle cx="10" cy="10" r="3" fill="#1c1c1c" /></svg>
  </div>
);

const StatusBar = () => (
  <div className="flex h-[24px] items-center justify-between border-t border-[#6a6a6a] bg-[#141414] pt-[1px] pr-[16px] pl-1 text-[12px] tracking-[-0.2px] text-[#e0e0e0]">
    <span>Page 1 of 1</span>
    <div className="flex items-center">
      <span>-</span>
      <svg width="102" height="11" viewBox="0 0 102 11" className="mx-[4px]"><path d="M0 5.500h102" stroke="#aaa" /><rect x="51" y="0" width="3" height="11" fill="#fff" /></svg>
      <svg width="8" height="8" className="ml-[3px]"><path d="M4 0v8M0 4h8" stroke="#ddd" strokeWidth={1.300} /></svg>
      <span className="ml-[13px]">111%</span>
      <svg width="16" height="11" viewBox="0 0 16 11" fill="none" stroke="#ccc" className="ml-[13px]"><rect x=".5" y=".5" width="15" height="10" /><path d="M6 5.500H3M4.500 4L3 5.500 4.500 7M10 5.500h3M11.500 4L13 5.500 11.500 7M8 2v2M8 7v2" /></svg>
    </div>
  </div>
);

export default function App() {
  return (
    <div className="relative flex h-[1037px] w-[1919px] flex-col overflow-hidden bg-[#141414]" style={{ fontFamily: SEGOE }}>
      <MenuBar />
      <Ribbon />
      <div className="flex h-[885px]">
        <LeftNav />
        <div className="flex w-[1448px] shrink-0 flex-col">
          <div className="flex h-[850px]">
            <Report />
            <FiltersPane />
          </div>
          <PageTabs />
        </div>
        <VizPane />
        <DataPane />
      </div>
      <StatusBar />
      <CaptureBar />
    </div>
  );
}
